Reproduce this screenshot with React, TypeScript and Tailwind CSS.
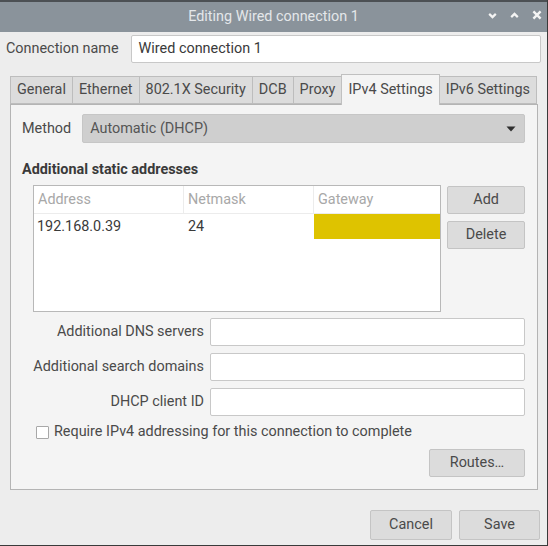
import React from 'react';

const tabs = ['General', 'Ethernet', '802.1X Security', 'DCB', 'Proxy', 'IPv4 Settings', 'IPv6 Settings'];

const fields = ['Additional DNS servers', 'Additional search domains', 'DHCP client ID'];

const Btn = ({ label, className = '' }: { label: string; className?: string }) => (
  <button className={`h-[28px] bg-[#dcdcdc] border border-[#c4c4c4] rounded-[2px] text-[#4a4a4a] text-[14.4px] ${className}`}>
    {label}
  </button>
);

const App = () => {
  return (
    <div
      className="w-[548px] h-[546px] bg-[#ededed] flex flex-col border-r border-b border-[#3a3a3a] text-[#4a4a4a] text-[14.4px] leading-[20px] overflow-hidden"
      style={{ fontFamily: 'Roboto, "Liberation Sans", sans-serif' }}
    >
      {/* title bar */}
      <div className="h-[32px] bg-[#8a939b] border-t-2 border-[#4c5054] flex items-center relative shrink-0">
        <div className="flex-1 text-center text-[#e4e7ea] text-[14.4px]">Editing Wired connection 1</div>
        <div className="absolute right-[4px] top-[7px] flex items-center gap-[11px] text-[#f4f4f4]">
          <svg width="11" height="11" viewBox="0 0 10 10"><path d="M2 3.5 L5 6.5 L8 3.5" stroke="currentColor" strokeWidth="2" fill="none" /></svg>
          <svg width="11" height="11" viewBox="0 0 10 10"><path d="M2 6.5 L5 3.5 L8 6.5" stroke="currentColor" strokeWidth="2" fill="none" /></svg>
          <svg width="12" height="12" viewBox="0 0 10 10"><path d="M2 2 L8 8 M8 2 L2 8" stroke="currentColor" strokeWidth="2" fill="none" /></svg>
        </div>
      </div>

      {/* connection name */}
      <div className="flex items-center pl-[6px] pr-[6px] mt-[3px] gap-[12px]">
        <span className="whitespace-nowrap">Connection name</span>
        <div className="flex-1 h-[28px] bg-white border border-[#c8c8c8] rounded-[2px] flex items-center px-[7px] text-[#3a3a3a]">
          Wired connection 1
        </div>
      </div>

      {/* tabs */}
      <div className="ml-[10px] mr-[9px] mt-[11px] flex flex-col">
        <div className="flex items-end h-[30px]">
          {tabs.map((t) => {
            const active = t === 'IPv4 Settings';
            return (
              <div
                key={t}
                className={
                  active
                    ? 'h-[31px] -mb-px -ml-px z-10 bg-[#f4f4f4] border border-b-0 border-[#c0c0c0] px-[6px] flex items-center whitespace-nowrap'
                    : 'h-[28px] bg-[#dcdcdc] border border-[#bdbdbd] -ml-px first:ml-0 px-[6px] flex items-center whitespace-nowrap'
                }
              >
                {t}
              </div>
            );
          })}
        </div>

        <div className="h-[386px] bg-[#f4f4f4] border border-[#b4b4b4] flex flex-col pl-[11px] pr-[12px] pt-[9px]">
          <div className="flex items-center gap-[11px]">
            <span>Method</span>
            <div className="flex-1 h-[29px] bg-[#cfcfcf] border border-[#c6c6c6] rounded-[2px] flex items-center justify-between pl-[7px] pr-[8px] text-[#555]">
              <span>Automatic (DHCP)</span>
              <svg width="10" height="6" viewBox="0 0 10 6"><path d="M0.5 0.5 L9.5 0.5 L5 5.5 Z" fill="#2f2f2f" /></svg>
            </div>
          </div>

          <div className="font-bold text-[#3a3a3a] mt-[18px] leading-[18px]">Additional static addresses</div>

          <div className="flex mt-[6px] ml-[11px] gap-[6px]">
            <div className="w-[409px] h-[127px] bg-white border border-[#b8b8b8] flex flex-col">
              <div className="flex h-[28px] text-[#a8a8a8] border-b border-[#ececec]">
                <div className="w-[150px] border-r border-[#ececec] pl-[4px] flex items-center">Address</div>
                <div className="w-[130px] border-r border-[#ececec] pl-[4px] flex items-center">Netmask</div>
                <div className="flex-1 pl-[4px] flex items-center">Gateway</div>
              </div>
              <div className="flex h-[25px] text-[#3a3a3a]">
                <div className="w-[150px] pl-[3px] flex items-center">192.168.0.39</div>
                <div className="w-[130px] pl-[4px] flex items-center">24</div>
                <div className="flex-1 bg-[#dec300]" />
              </div>
            </div>
            <div className="flex flex-col gap-[7px] w-[78px] pt-px">
              <Btn label="Add" className="w-full" />
              <Btn label="Delete" className="w-full" />
            </div>
          </div>

          <div className="flex flex-col gap-[7px] mt-[6px]">
            {fields.map((f) => (
              <div key={f} className="flex items-center gap-[6px]">
                <span className="w-[182px] text-right whitespace-nowrap">{f}</span>
                <div className="flex-1 h-[28px] bg-white border border-[#c8c8c8] rounded-[2px]" />
              </div>
            ))}
          </div>

          <div className="flex items-center gap-[5px] mt-[6px] ml-[14px]">
            <div className="w-[13px] h-[13px] bg-white border border-[#a8a8a8] rounded-[1px]" />
            <span>Require IPv4 addressing for this connection to complete</span>
          </div>

          <div className="flex justify-end mt-[7px]">
            <Btn label="Routes…" className="w-[96px]" />
          </div>
        </div>
      </div>

      <div className="flex justify-end gap-[7px] pr-[7px] mt-[20px]">
        <Btn label="Cancel" className="w-[82px] h-[30px]" />
        <Btn label="Save" className="w-[81px] h-[30px]" />
      </div>
    </div>
  );
};

export default App;
